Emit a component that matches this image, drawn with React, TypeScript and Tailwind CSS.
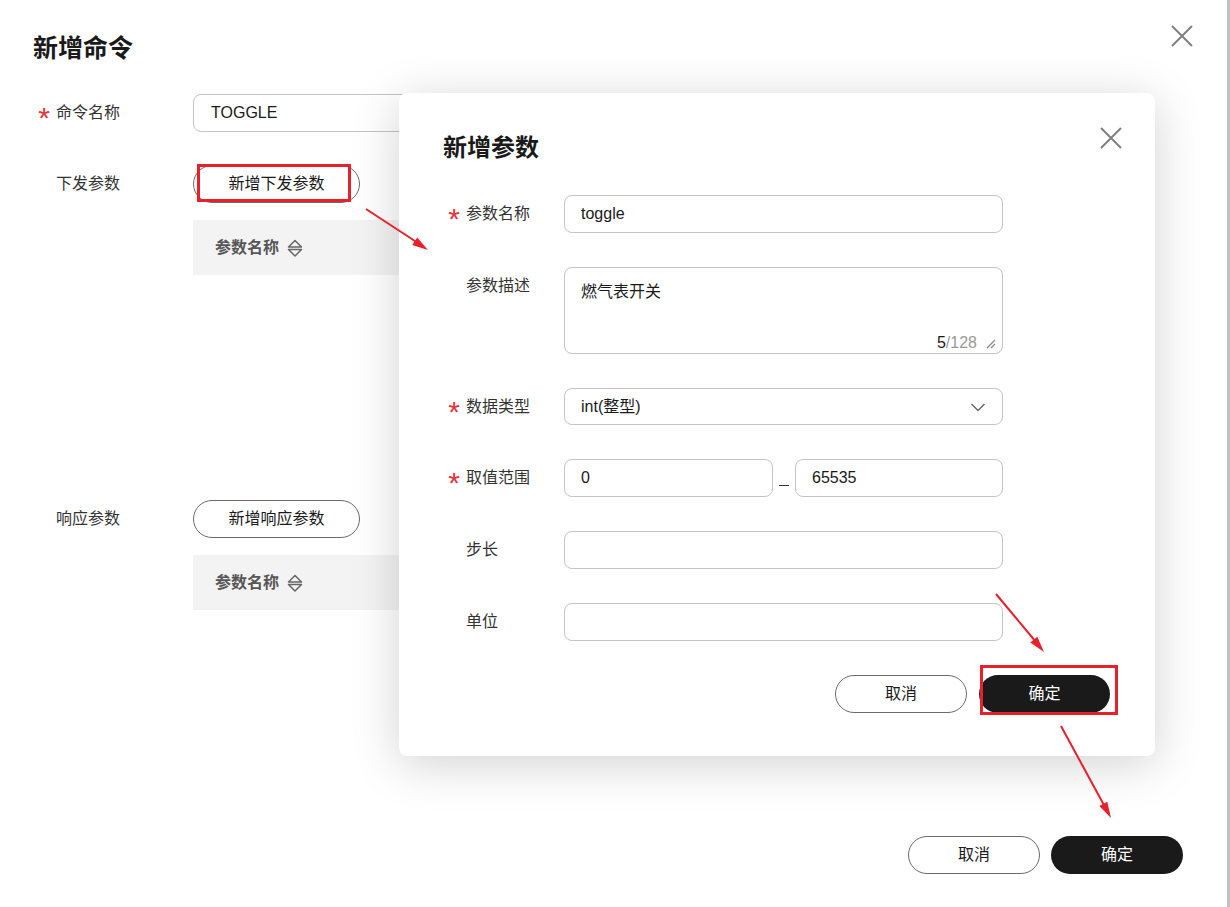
const FONT = { fontFamily: '"Liberation Sans", "Noto Sans CJK SC", sans-serif' };

function CloseIcon({ className }: { className: string }) {
  return (
    <svg className={className} width="22" height="22" viewBox="0 0 22 22" fill="none" stroke="#7f7f7f" strokeWidth="2">
      <path d="M1 1 L21 21 M21 1 L1 21" />
    </svg>
  );
}

function Star() {
  return (
    <span className="flex w-[23px] shrink-0 justify-end pr-[6px] text-[30px] leading-none text-[#e5333b] translate-y-[5px]">
      *
    </span>
  );
}

function Label({ text, required }: { text: string; required?: boolean }) {
  return (
    <div className="flex h-[30px] items-center text-[16px] text-[#333]">
      {required ? <Star /> : <span className="w-[23px] shrink-0" />}
      <span>{text}</span>
    </div>
  );
}

function SortIcon() {
  return (
    <svg width="16" height="18" viewBox="0 0 16 18" fill="none" stroke="#666" strokeWidth="1.5" strokeLinejoin="round">
      <path d="M1.5 8 L8 1.5 L14.5 8 Z" />
      <path d="M1.5 10.5 L8 17 L14.5 10.5 Z" />
    </svg>
  );
}

function TableHead() {
  return (
    <div className="ml-[160px] flex h-[55px] w-[900px] items-center gap-[8px] bg-[#f3f3f3] pl-[22px] text-[16px] font-bold text-[#575757]">
      参数名称
      <SortIcon />
    </div>
  );
}

function Field({ value }: { value?: string }) {
  return (
    <div className="flex h-[38px] w-[439px] items-center rounded-[8px] border border-[#c4c4c4] px-[16px] text-[16px] text-[#1a1a1a]">
      {value}
    </div>
  );
}

function ParamDialog() {
  return (
    <div className="absolute left-[399px] top-[93px] h-[663px] w-[756px] rounded-[8px] bg-white pl-[44px] shadow-[0_8px_48px_rgba(0,0,0,0.18)]">
      <CloseIcon className="absolute right-[33px] top-[34px]" />
      <h2 className="pt-[38px] text-[24px] font-bold leading-[34px] text-[#1a1a1a]">新增参数</h2>

      <div className="mt-[30px] flex flex-col gap-[34px]">
        <div className="flex items-center">
          <div className="w-[121px]"><Label text="参数名称" required /></div>
          <Field value="toggle" />
        </div>

        <div className="flex items-start">
          <div className="w-[121px] pt-[4px]"><Label text="参数描述" /></div>
          <div className="relative h-[87px] w-[439px] rounded-[8px] border border-[#c4c4c4] px-[16px] pt-[12px] text-[16px] leading-[24px] text-[#1a1a1a]">
            燃气表开关
            <div className="absolute bottom-[-2px] right-[6px] flex items-center gap-[8px] text-[16px]">
              <span>
                <span className="text-[#1a1a1a]">5</span>
                <span className="text-[#999]">/128</span>
              </span>
              <svg width="11" height="11" viewBox="0 0 11 11" stroke="#888" strokeWidth="1.2">
                <path d="M2 10 L10 2 M6 10 L10 6" />
              </svg>
            </div>
          </div>
        </div>

        <div className="flex items-center">
          <div className="w-[121px]"><Label text="数据类型" required /></div>
          <div className="flex h-[37px] w-[439px] items-center justify-between rounded-[8px] border border-[#c4c4c4] pl-[16px] pr-[16px] text-[16px] text-[#1a1a1a]">
            int(整型)
            <svg width="16" height="10" viewBox="0 0 16 10" fill="none" stroke="#666" strokeWidth="1.5">
              <path d="M1.5 2 L8 8.5 L14.5 2" />
            </svg>
          </div>
        </div>

        <div className="flex items-center">
          <div className="w-[121px]"><Label text="取值范围" required /></div>
          <div className="flex w-[439px] items-stretch">
            <div className="flex h-[38px] w-[209px] items-center rounded-[8px] border border-[#c4c4c4] px-[16px] text-[16px] text-[#1a1a1a]">0</div>
            <div className="flex w-[22px] items-end justify-center pb-[11px]">
              <div className="h-[1.5px] w-[10px] bg-[#333]" />
            </div>
            <div className="flex h-[38px] w-[208px] items-center rounded-[8px] border border-[#c4c4c4] px-[16px] text-[16px] text-[#1a1a1a]">65535</div>
          </div>
        </div>

        <div className="flex items-center">
          <div className="w-[121px]"><Label text="步长" /></div>
          <Field />
        </div>

        <div className="flex items-center">
          <div className="w-[121px]"><Label text="单位" /></div>
          <Field />
        </div>
      </div>

      <div className="mr-[45px] mt-[34px] flex justify-end gap-[12px]">
        <button className="h-[38px] w-[132px] rounded-full border border-[#6b6b6b] bg-white text-[16px] text-[#1a1a1a]">取消</button>
        <button className="h-[38px] w-[131px] rounded-full bg-[#1a1a1a] text-[16px] text-white">确定</button>
      </div>
    </div>
  );
}

function Annotations() {
  return (
    <svg className="pointer-events-none absolute left-0 top-0" width="1227" height="907" viewBox="0 0 1227 907">
      <g fill="none" stroke="#e8202a" strokeWidth="3">
        <rect x="198.5" y="165.5" width="151" height="35" />
        <rect x="981.5" y="666.5" width="135" height="47" />
      </g>
      <g stroke="#e8202a" strokeWidth="2" fill="#e8202a">
        <line x1="366" y1="209" x2="418" y2="243" />
        <polygon points="428,250 412.2,244.9 417.2,237.4" stroke="none" />
        <line x1="996" y1="594" x2="1036" y2="642" />
        <polygon points="1044,652 1030.3,642.6 1037.3,636.8" stroke="none" />
        <line x1="1061" y1="726" x2="1105" y2="807" />
        <polygon points="1111,818 1099.4,806 1107.3,801.7" stroke="none" />
      </g>
    </svg>
  );
}

export default function App() {
  return (
    <div className="flex h-[907px] w-full overflow-hidden bg-white" style={FONT}>
      <div className="relative flex-1 pl-[33px] pr-[44px]">
        <CloseIcon className="absolute right-[34px] top-[25px]" />
        <h1 className="pt-[31px] text-[25px] font-bold leading-[34px] text-[#1a1a1a]">新增命令</h1>

        <div className="mt-[29px] flex items-center">
          <div className="w-[160px]"><Label text="命令名称" required /></div>
          <div className="flex h-[38px] w-[900px] items-center rounded-[8px] border border-[#c4c4c4] px-[17px] text-[16px] text-[#1a1a1a]">
            TOGGLE
          </div>
        </div>

        <div className="mt-[33px] flex items-center">
          <div className="w-[160px]"><Label text="下发参数" /></div>
          <button className="h-[38px] w-[167px] rounded-full border border-[#6b6b6b] bg-white text-[16px] text-[#1a1a1a]">新增下发参数</button>
        </div>
        <div className="mt-[17px]"><TableHead /></div>

        <div className="mt-[225px] flex items-center">
          <div className="w-[160px]"><Label text="响应参数" /></div>
          <button className="h-[38px] w-[167px] rounded-full border border-[#6b6b6b] bg-white text-[16px] text-[#1a1a1a]">新增响应参数</button>
        </div>
        <div className="mt-[17px]"><TableHead /></div>

        <div className="mt-[226px] flex justify-end gap-[11px]">
          <button className="h-[38px] w-[132px] rounded-full border border-[#6b6b6b] bg-white text-[16px] text-[#1a1a1a]">取消</button>
          <button className="h-[38px] w-[132px] rounded-full bg-[#1a1a1a] text-[16px] text-white">确定</button>
        </div>

        <ParamDialog />
        <Annotations />
      </div>
      <div className="w-[3px] shrink-0 bg-[#c2c2c2]" />
    </div>
  );
}
